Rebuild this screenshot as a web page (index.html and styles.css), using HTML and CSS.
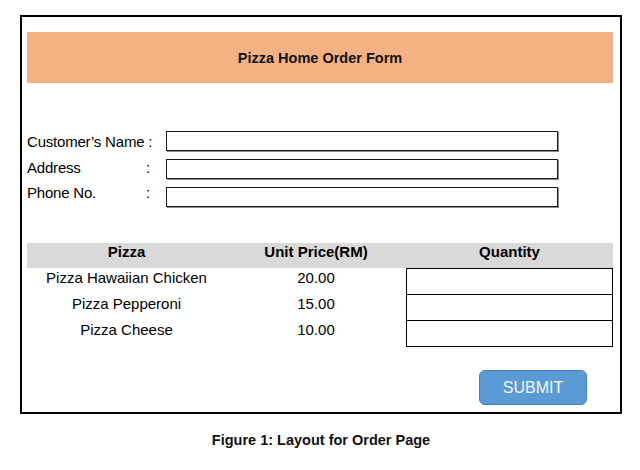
FILE: index.html
```html
<!DOCTYPE html>
<html>
<head>
<meta charset="utf-8">
<link rel="stylesheet" href="styles.css">
</head>
<body>
<div class="page">
  <div class="frame">
    <div class="banner">Pizza Home Order Form</div>
    <div class="fields">
      <div class="labels">
        <div class="label-row"><span class="full">Customer’s Name :</span></div>
        <div class="label-row"><span>Address</span><span>:</span></div>
        <div class="label-row"><span>Phone No.</span><span>:</span></div>
      </div>
      <div class="inputs">
        <input class="field" type="text">
        <input class="field" type="text">
        <input class="field" type="text">
      </div>
    </div>
    <div class="table">
      <div class="thead">
        <div>Pizza</div>
        <div>Unit Price(RM)</div>
        <div>Quantity</div>
      </div>
      <div class="trow">
        <div class="cell">Pizza Hawaiian Chicken</div>
        <div class="cell">20.00</div>
        <div class="qty"></div>
      </div>
      <div class="trow">
        <div class="cell">Pizza Pepperoni</div>
        <div class="cell">15.00</div>
        <div class="qty"></div>
      </div>
      <div class="trow last">
        <div class="cell">Pizza Cheese</div>
        <div class="cell">10.00</div>
        <div class="qty"></div>
      </div>
    </div>
    <div class="actions">
      <button class="submit" type="button">SUBMIT</button>
    </div>
  </div>
  <div class="caption">Figure 1: Layout for Order Page</div>
</div>
</body>
</html>
```

FILE: styles.css
```css
html, body {
  margin: 0;
  padding: 0;
  background: #ffffff;
}

body {
  font-family: "Liberation Sans", Arial, sans-serif;
  color: #000;
}

.page {
  padding: 15px 0 0 20px;
  width: 602px;
}

.frame {
  box-sizing: border-box;
  width: 602px;
  height: 399px;
  border: 2px solid #000;
  padding: 15px 7px 0 5px;
}

.banner {
  height: 51px;
  background: #F4B183;
  display: flex;
  align-items: center;
  justify-content: center;
  font-weight: bold;
  font-size: 14.5px;
  color: #111;
}

.fields {
  margin-top: 48px;
  display: flex;
}

.labels {
  width: 139px;
  margin-top: -2px;
  font-size: 15px;
  line-height: 25.5px;
  letter-spacing: -0.2px;
}

.label-row {
  display: grid;
  grid-template-columns: 119px auto;
}

.label-row .full {
  grid-column: 1 / 3;
}

.inputs {
  display: flex;
  flex-direction: column;
  gap: 8px;
}

.field {
  display: block;
  box-sizing: border-box;
  width: 392px;
  height: 20px;
  margin: 0;
  padding: 0;
  border: 1px solid #1a1a1a;
  box-shadow: 1px 1px 0 #8c8c8c;
  background: #fff;
  outline: none;
}

.table {
  margin-top: 36px;
  font-size: 15px;
}

.thead {
  display: grid;
  grid-template-columns: 199px 180px 207px;
  height: 25px;
  background: #D9D9D9;
  font-weight: bold;
  line-height: 17px;
  text-align: center;
  box-sizing: border-box;
}

.trow {
  display: grid;
  grid-template-columns: 199px 180px 207px;
  height: 26px;
}

.trow.last {
  height: 27px;
}

.cell {
  text-align: center;
  line-height: 18px;
  padding-top: 1px;
}

.qty {
  box-sizing: border-box;
  border: 1px solid #000;
  border-bottom: none;
}

.trow.last .qty {
  border-bottom: 1px solid #000;
}

.actions {
  margin-top: 23px;
  display: flex;
  justify-content: flex-end;
  padding-right: 26px;
}

.submit {
  box-sizing: border-box;
  width: 108px;
  height: 35px;
  background: #5B9BD5;
  border: 1px solid #4A7EBB;
  border-radius: 6px;
  color: #F4F7FB;
  font-family: "Liberation Sans", Arial, sans-serif;
  font-size: 16px;
  padding: 1px 0 0 0;
}

.caption {
  margin-top: 18px;
  text-align: center;
  font-weight: bold;
  font-size: 14.5px;
  line-height: 17px;
  color: #111;
}
```
